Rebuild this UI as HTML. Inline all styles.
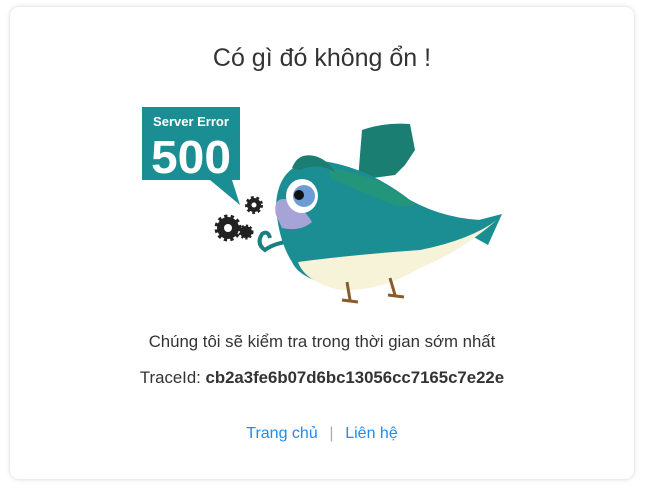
<!DOCTYPE html>
<html><head><meta charset="utf-8"><style>
body{margin:0;width:645px;height:491px;background:#fff;font-family:"Liberation Sans",Arial,sans-serif;overflow:hidden}
.card{position:absolute;left:10px;top:7px;width:624px;height:472px;border-radius:9px;box-shadow:0 0 5px rgba(0,0,0,.18);background:#fff}
h1{position:absolute;top:37px;left:0;width:100%;text-align:center;margin:0;font-weight:normal;font-size:25px;color:#333}
.t{position:absolute;left:0;width:100%;text-align:center;font-size:16.8px;color:#333}
a{color:#1e8cf0;text-decoration:none;font-size:16px}
svg{position:absolute;left:0;top:0}
</style></head><body>
<div class="card">
<h1>Có gì đó không ổn !</h1>
<div class="t" style="top:325px">Chúng tôi sẽ kiểm tra trong thời gian sớm nhất</div>
<div class="t" style="top:361px">TraceId: <b>cb2a3fe6b07d6bc13056cc7165c7e22e</b></div>
<div class="t" style="top:416px"><a>Trang chủ</a> <span style="color:#aaa;margin:0 7px;font-size:16px">|</span> <a>Liên hệ</a></div>
</div>
<svg width="645" height="491">
<polygon points="142,107 240,107 240,180 232,180 240,205 210,180 142,180" fill="#1b8e93"/>
<text x="191" y="126" font-size="13" font-weight="bold" fill="#fff" text-anchor="middle" font-family="Liberation Sans">Server Error</text>
<text x="191" y="173" font-size="46" font-weight="bold" fill="#fff" text-anchor="middle" font-family="Liberation Sans" textLength="80" lengthAdjust="spacingAndGlyphs">500</text>
<circle cx="228" cy="228" r="11" fill="#222" stroke="#222" stroke-width="5" stroke-dasharray="3 3"/>
<circle cx="228" cy="228" r="4" fill="#fff"/>
<circle cx="254" cy="205" r="7" fill="#222" stroke="#222" stroke-width="4" stroke-dasharray="2.5 2.5"/>
<circle cx="254" cy="205" r="2.5" fill="#fff"/>
<circle cx="246" cy="232" r="6" fill="#222" stroke="#222" stroke-width="3" stroke-dasharray="2 2"/>
<path d="M358,180 L362,130 Q385,122 410,124 L415,150 L405,165 L395,175 Z" fill="#1b7e72"/>
<path d="M440,230 L502,214 L488,245 L470,235 Z" fill="#1b8e93"/>
<path d="M300,240 Q275,242 265,250 Q256,244 262,234 Q268,230 270,238" fill="none" stroke="#1b7e80" stroke-width="4"/>
<path d="M276,205 Q278,165 315,160 Q365,165 410,200 Q450,222 497,220 Q460,252 420,262 Q380,292 340,287 Q300,280 292,262 Q278,240 276,205 Z" fill="#1b8e93"/>
<path d="M298,262 Q350,255 420,250 Q470,240 497,220 Q460,252 420,268 Q380,292 340,290 Q305,282 298,262 Z" fill="#f6f3d8"/>
<path d="M330,168 Q380,175 415,205 Q400,210 370,195 Q345,185 330,178 Z" fill="#22957a"/>
<path d="M276,215 Q272,195 290,200 Q305,210 312,222 Q300,232 282,228 Z" fill="#a6a4d6"/>
<ellipse cx="302" cy="196" rx="16" ry="17" fill="#fff"/>
<circle cx="304" cy="196" r="11" fill="#6d9bd6"/>
<circle cx="299" cy="195" r="5" fill="#111"/>
<path d="M292,168 Q298,152 315,156 Q328,160 335,172 Q318,162 300,170 Z" fill="#1b7e72"/>
<path d="M347,282 L350,300 M390,278 L395,295" stroke="#8b5a2b" stroke-width="3"/>
<path d="M342,300 L358,302 M388,295 L404,297" stroke="#8b5a2b" stroke-width="3"/>
</svg>
</body></html>
